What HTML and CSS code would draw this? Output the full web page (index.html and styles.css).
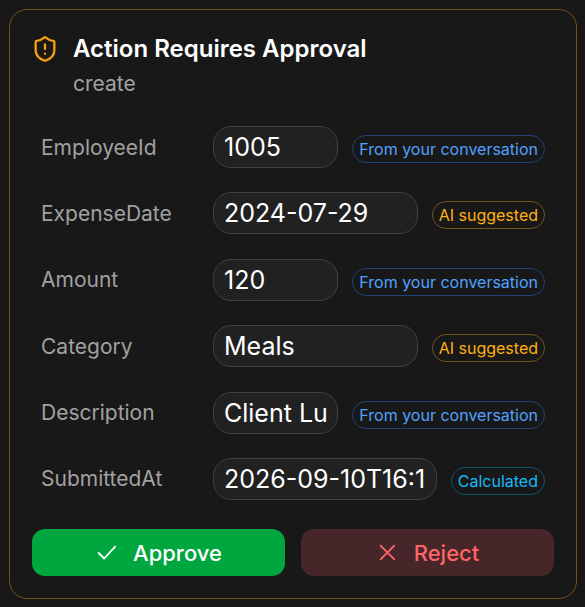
FILE: index.html
```html
<!DOCTYPE html>
<html lang="en">
<head>
  <meta charset="UTF-8" />
  <meta name="viewport" content="width=device-width, initial-scale=1.0"/>
  <title>Action Requires Approval</title>
  <link rel="stylesheet" href="styles.css">
</head>
<body>
  <form class="card">
    <div class="header">
      <svg class="shield" viewBox="0 0 24 24" aria-hidden="true">
        <path d="M20 13c0 5-3.5 7.5-7.66 8.95a1 1 0 0 1-.67-.01C7.5 20.5 4 18 4 13V6a1 1 0 0 1 1-1c2 0 4.5-1.2 6.24-2.72a1.17 1.17 0 0 1 1.52 0C14.51 3.81 17 5 19 5a1 1 0 0 1 1 1z"/>
        <path d="M12 8v4M12 16h.01"/>
      </svg>
      <div>
        <h1>Action Requires Approval</h1>
        <p>create</p>
      </div>
    </div>

    <div class="fields">
      <div class="field">
        <label for="employeeId">EmployeeId</label>
        <input type="text" id="employeeId" value="1005" />
        <span class="badge blue">From your conversation</span>
      </div>
      <div class="field">
        <label for="expenseDate">ExpenseDate</label>
        <input type="text" id="expenseDate" value="2024-07-29" />
        <span class="badge amber">AI suggested</span>
      </div>
      <div class="field">
        <label for="amount">Amount</label>
        <input type="text" id="amount" value="120" />
        <span class="badge blue">From your conversation</span>
      </div>
      <div class="field">
        <label for="category">Category</label>
        <input type="text" id="category" value="Meals" />
        <span class="badge amber">AI suggested</span>
      </div>
      <div class="field">
        <label for="description">Description</label>
        <input type="text" id="description" value="Client Lunch" />
        <span class="badge blue">From your conversation</span>
      </div>
      <div class="field">
        <label for="submittedAt">SubmittedAt</label>
        <input type="text" id="submittedAt" value="2026-09-10T16:19:00" />
        <span class="badge cyan">Calculated</span>
      </div>
    </div>

    <div class="actions">
      <button type="button" class="approve">
        <svg viewBox="0 0 24 24" aria-hidden="true"><path d="M4 12l6 6L22 5"/></svg>
        Approve
      </button>
      <button type="button" class="reject">
        <svg viewBox="0 0 24 24" aria-hidden="true"><path d="M5 4l15 15M20 4L5 19"/></svg>
        Reject
      </button>
    </div>
  </form>
</body>
</html>
```

FILE: styles.css
```css
* {
  box-sizing: border-box;
}
body {
  font-family: Inter, "Liberation Sans", sans-serif;
  background: #171717;
  color: #fff;
  margin: 0;
  padding: 9px 8px 8px 9px;
}
.card {
  display: flex;
  flex-direction: column;
  min-height: calc(100vh - 17px);
  padding: 22px;
  background: #181818;
  border: 1px solid #76531a;
  border-radius: 18px;
}
.header {
  display: flex;
  gap: 14px;
  margin-bottom: 24px;
}
.shield {
  width: 28px;
  height: 28px;
  margin: 3px 0 0 -1px;
  stroke: #f59e0b;
}
svg {
  flex: none;
  fill: none;
  stroke: currentColor;
  stroke-width: 2;
  stroke-linecap: round;
  stroke-linejoin: round;
}
h1 {
  margin: 0;
  font-size: 24px;
  font-weight: 600;
  line-height: 34px;
}
.header p {
  margin: 0;
  color: #a1a1a1;
  font-size: 21px;
  line-height: 36px;
}
.fields {
  display: flex;
  flex: 1;
  flex-direction: column;
  justify-content: space-between;
  gap: 24px;
  padding: 0 9px;
  margin-bottom: 29px;
}
.field {
  display: flex;
  align-items: center;
}
.field label {
  flex: none;
  width: 172px;
  color: #a1a1a1;
  font-size: 21px;
}
.field input {
  flex: 1;
  min-width: 0;
  height: 42px;
  padding: 0 10px;
  background: #212121;
  border: 1px solid #414141;
  border-radius: 18px;
  color: #fff;
  font-family: inherit;
  font-size: 25px;
}
.badge {
  flex: none;
  margin: 4px 0 0 14px;
  padding: 0 6px;
  border: 1px solid;
  border-radius: 14px;
  font-size: 16px;
  line-height: 26px;
}
.blue {
  color: #51a2ff;
  border-color: #1f4377;
}
.amber {
  color: #ffb011;
  border-color: #76531a;
}
.cyan {
  color: #16b8f5;
  border-color: #125570;
}
.actions {
  display: flex;
  gap: 16px;
}
button {
  display: flex;
  flex: 1;
  align-items: center;
  justify-content: center;
  gap: 16px;
  height: 47px;
  padding: 0;
  border: none;
  border-radius: 13px;
  font-family: inherit;
  font-size: 22px;
  font-weight: 500;
  cursor: pointer;
}
button svg {
  width: 22px;
  height: 22px;
}
.approve {
  background: #00a63e;
  color: #fff;
}
.reject {
  background: #462628;
  color: #ff6467;
}
```
